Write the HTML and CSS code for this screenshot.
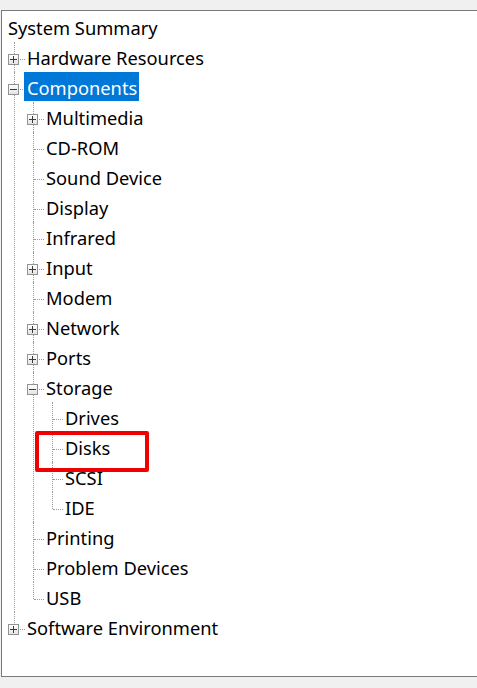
FILE: index.html
```html
<!DOCTYPE html>
<html lang="en">
<head>
   <meta charset="utf-8"/>
   <meta name="viewport" content="width=device-width, initial-scale=1" />
   <link rel="stylesheet" href="styles.css">
</head>
<body>
<!-- system information tree pane -->
<div class="panel">
   <div class="row root-row"><span class="label">System Summary</span></div>
   <ul class="tree">
      <li><div class="row"><span class="box plus"></span><span class="label">Hardware Resources</span></div></li>
      <li>
         <div class="row"><span class="box minus"></span><span class="label selected">Components</span></div>
         <ul class="tree">
            <li><div class="row"><span class="box plus"></span><span class="label">Multimedia</span></div></li>
            <li><div class="row"><span class="label">CD-ROM</span></div></li>
            <li><div class="row"><span class="label">Sound Device</span></div></li>
            <li><div class="row"><span class="label">Display</span></div></li>
            <li><div class="row"><span class="label">Infrared</span></div></li>
            <li><div class="row"><span class="box plus"></span><span class="label">Input</span></div></li>
            <li><div class="row"><span class="label">Modem</span></div></li>
            <li><div class="row"><span class="box plus"></span><span class="label">Network</span></div></li>
            <li><div class="row"><span class="box plus"></span><span class="label">Ports</span></div></li>
            <li>
               <div class="row"><span class="box minus"></span><span class="label">Storage</span></div>
               <ul class="tree">
                  <li><div class="row"><span class="label">Drives</span></div></li>
                  <li class="marked"><div class="row"><span class="label">Disks</span></div></li>
                  <li><div class="row"><span class="label">SCSI</span></div></li>
                  <li><div class="row"><span class="label">IDE</span></div></li>
               </ul>
            </li>
            <li><div class="row"><span class="label">Printing</span></div></li>
            <li><div class="row"><span class="label">Problem Devices</span></div></li>
            <li><div class="row"><span class="label">USB</span></div></li>
         </ul>
      </li>
      <li><div class="row"><span class="box plus"></span><span class="label">Software Environment</span></div></li>
   </ul>
</div>
</body>
</html>
```

FILE: styles.css
```css
/* page around the tree pane */
body {
   margin: 0;
   background: #f0f0f0;
   font-family: "Noto Sans", "Open Sans", sans-serif;
   font-size: 18.3px;
   color: #000;
}

.panel {
   margin: 10px 0 0 1px;
   height: 664px;
   padding-top: 1px;
   background: #fff;
   border-top: 1px solid #7a7a7a;
   border-left: 1px solid #7a7a7a;
   border-bottom: 1px solid #7a7a7a;
   box-sizing: content-box;
   overflow: hidden;
}

/* tree rows */
.tree {
   list-style: none;
   margin: 0;
   padding: 0;
}

.tree .tree {
   padding-left: 19px;
}

.tree li {
   position: relative;
}

.row {
   height: 30px;
   display: flex;
   align-items: flex-start;
   padding-left: 25px;
   position: relative;
}

.root-row {
   padding-left: 6px;
}

.label {
   display: block;
   height: 26px;
   line-height: 26px;
   padding: 3px 2px 0 0;
   white-space: nowrap;
   position: relative;
   z-index: 1;
}

.label.selected {
   background: #0078d7;
   color: #fff;
   margin-left: -3px;
   padding-left: 3px;
}

/* dotted tree lines */
.tree li::before {
   content: "";
   position: absolute;
   left: 12px;
   top: 0;
   bottom: 0;
   border-left: 1px dotted #9a9a9a;
}

.tree li:last-child::before {
   bottom: auto;
   height: 17px;
}

.tree li::after {
   content: "";
   position: absolute;
   left: 13px;
   top: 17px;
   width: 10px;
   border-top: 1px dotted #9a9a9a;
}

/* expand / collapse boxes */
.box {
   position: absolute;
   left: 6px;
   top: 12px;
   width: 9px;
   height: 9px;
   border: 1px solid #929292;
   background: linear-gradient(#ffffff, #e4e4e4);
   z-index: 2;
}

.box::before,
.box::after {
   content: "";
   position: absolute;
   background: #3a3a3a;
}

.box::before {
   left: 1px;
   top: 4px;
   width: 7px;
   height: 1px;
}

.plus::after {
   left: 4px;
   top: 1px;
   width: 1px;
   height: 7px;
}

/* red annotation frame */
.marked > .row::after {
   content: "";
   position: absolute;
   left: -5px;
   top: -1px;
   width: 106px;
   height: 33px;
   border: 4px solid #f00000;
   border-radius: 2px;
   z-index: 3;
}
```
